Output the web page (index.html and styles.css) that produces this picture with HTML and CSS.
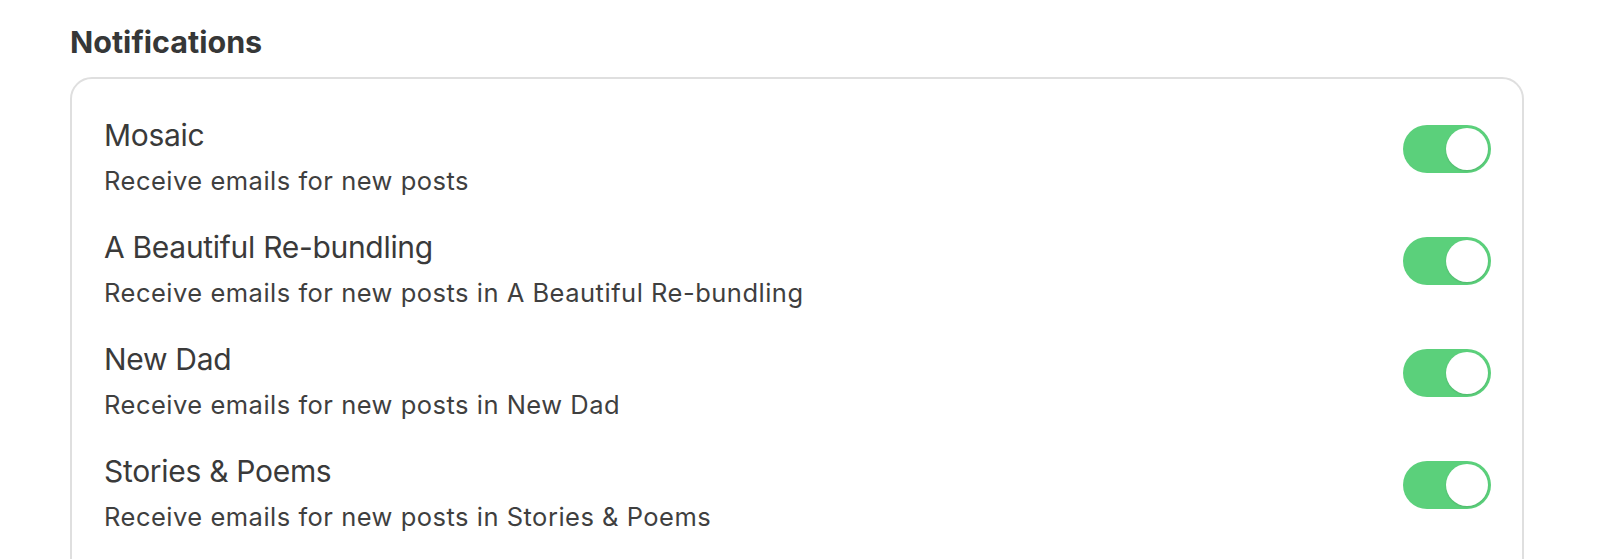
FILE: index.html
```html
<!DOCTYPE html>
<html lang="en">
<head>
<meta charset="utf-8">
<title>Notifications</title>
<link rel="stylesheet" href="styles.css">
</head>
<body>
<main class="page">
  <h2 class="heading">Notifications</h2>
  <section class="card">
    <div class="row">
      <div class="row-text">
        <div class="row-title">Mosaic</div>
        <div class="row-desc">Receive emails for new posts</div>
      </div>
      <span class="toggle is-on" role="switch" aria-checked="true"><span class="knob"></span></span>
    </div>
    <div class="row">
      <div class="row-text">
        <div class="row-title">A Beautiful Re-bundling</div>
        <div class="row-desc">Receive emails for new posts in A Beautiful Re-bundling</div>
      </div>
      <span class="toggle is-on" role="switch" aria-checked="true"><span class="knob"></span></span>
    </div>
    <div class="row">
      <div class="row-text">
        <div class="row-title">New Dad</div>
        <div class="row-desc">Receive emails for new posts in New Dad</div>
      </div>
      <span class="toggle is-on" role="switch" aria-checked="true"><span class="knob"></span></span>
    </div>
    <div class="row">
      <div class="row-text">
        <div class="row-title">Stories &amp; Poems</div>
        <div class="row-desc">Receive emails for new posts in Stories &amp; Poems</div>
      </div>
      <span class="toggle is-on" role="switch" aria-checked="true"><span class="knob"></span></span>
    </div>
  </section>
</main>
</body>
</html>
```

FILE: styles.css
```css
html, body {
  margin: 0;
  padding: 0;
  background: #ffffff;
}

body {
  font-family: Inter, "Noto Sans", "Liberation Sans", sans-serif;
  color: #3c3c3c;
  overflow: hidden;
}

.page {
  width: 1454px;
  margin-left: 70px;
  padding-top: 24px;
}

.heading {
  margin: 0 0 17px 0;
  font-size: 30.5px;
  line-height: 36px;
  font-weight: 700;
  color: #363737;
}

.card {
  border: 2px solid #dfdfdf;
  border-radius: 22px;
  padding: 34px 31px 40px 32px;
  display: flex;
  flex-direction: column;
  gap: 22px;
}

.row {
  display: flex;
  align-items: flex-start;
  justify-content: space-between;
}

.row-title {
  font-size: 30px;
  line-height: 45px;
  font-weight: 400;
  letter-spacing: -0.3px;
  color: #3a3a3a;
}

.row-desc {
  font-size: 25.5px;
  line-height: 45px;
  font-weight: 400;
  letter-spacing: 0.5px;
  color: #3f3f3f;
}

.toggle {
  margin-top: 12px;
  width: 88px;
  height: 48px;
  border-radius: 24px;
  background: #5bd07b;
  display: flex;
  align-items: center;
  justify-content: flex-end;
  padding: 0 3px;
  box-sizing: border-box;
}

.knob {
  width: 42px;
  height: 42px;
  border-radius: 50%;
  background: #ffffff;
  box-shadow: 0 1px 2px rgba(0, 0, 0, 0.12);
}
```
